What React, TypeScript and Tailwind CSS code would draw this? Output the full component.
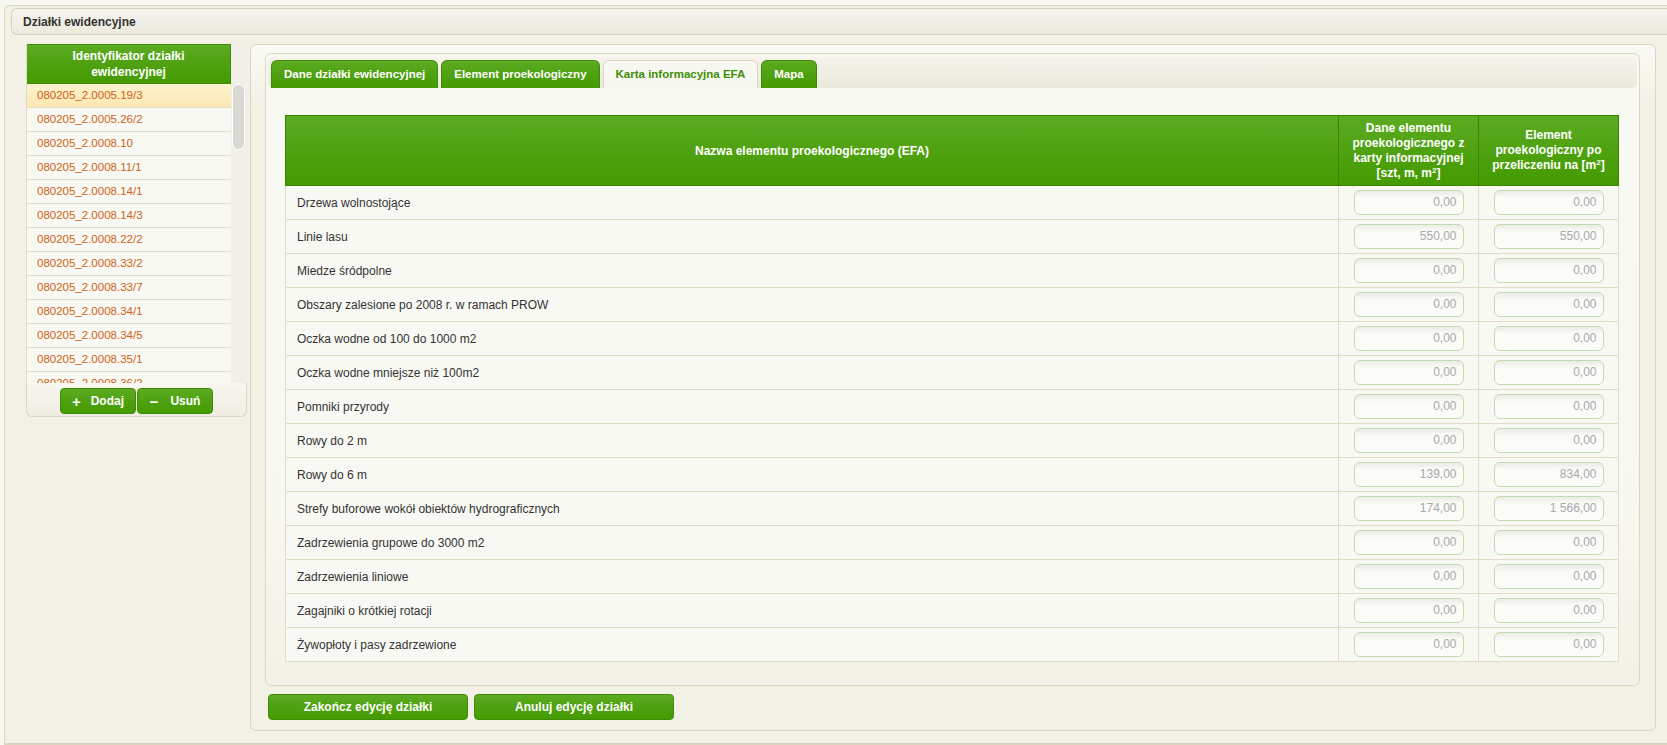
import * as React from "react";

const ids = [
  "080205_2.0005.19/3",
  "080205_2.0005.26/2",
  "080205_2.0008.10",
  "080205_2.0008.11/1",
  "080205_2.0008.14/1",
  "080205_2.0008.14/3",
  "080205_2.0008.22/2",
  "080205_2.0008.33/2",
  "080205_2.0008.33/7",
  "080205_2.0008.34/1",
  "080205_2.0008.34/5",
  "080205_2.0008.35/1",
  "080205_2.0008.36/2",
  "080205_2.0008.37/1",
];

const rows: [string, string, string][] = [
  ["Drzewa wolnostojące", "0,00", "0,00"],
  ["Linie lasu", "550,00", "550,00"],
  ["Miedze śródpolne", "0,00", "0,00"],
  ["Obszary zalesione po 2008 r. w ramach PROW", "0,00", "0,00"],
  ["Oczka wodne od 100 do 1000 m2", "0,00", "0,00"],
  ["Oczka wodne mniejsze niż 100m2", "0,00", "0,00"],
  ["Pomniki przyrody", "0,00", "0,00"],
  ["Rowy do 2 m", "0,00", "0,00"],
  ["Rowy do 6 m", "139,00", "834,00"],
  ["Strefy buforowe wokół obiektów hydrograficznych", "174,00", "1 566,00"],
  ["Zadrzewienia grupowe do 3000 m2", "0,00", "0,00"],
  ["Zadrzewienia liniowe", "0,00", "0,00"],
  ["Zagajniki o krótkiej rotacji", "0,00", "0,00"],
  ["Żywopłoty i pasy zadrzewione", "0,00", "0,00"],
];

const green = "bg-[linear-gradient(#5cab22,#50a212_45%,#449b00)]";

function ValueBox({ value }: { value: string }) {
  return (
    <div className="mx-auto w-[110px] h-[25px] rounded-[6px] border border-[#c3dbb0] bg-[linear-gradient(#ecece6,#fbfbf8_7px,#fcfcfa)] text-right pr-[6px] text-[12px] leading-[23px] text-[#a9a9a9]">
      {value}
    </div>
  );
}

function Tab({ label, active }: { label: string; active?: boolean }) {
  return active ? (
    <div className="h-[28px] px-[12px] rounded-t-[6px] border border-b-0 border-[#dcd6bf] bg-[#f8f8f3] text-[#3f8f06] text-[11.5px] font-bold flex items-center">
      {label}
    </div>
  ) : (
    <div className={`h-[28px] px-[12px] rounded-t-[6px] border border-b-0 border-[#3f8b08] ${green} text-white text-[11.5px] font-bold flex items-center`}>
      {label}
    </div>
  );
}

function Sq() {
  return <span className="relative -top-[4px] text-[8px] leading-none">2</span>;
}

export default function App() {
  return (
    <div className="h-[745px] w-full overflow-hidden bg-[#f8f8f3] pt-[5px] pl-[4px] font-['Liberation_Sans',Arial,sans-serif]">
      <div className="h-[738px] border border-r-0 border-b-0 border-[#dcd7c2] rounded-tl-[6px] bg-[#f3f1e6]">
        <div className="ml-[6px] mt-[2px] h-[27px] border border-r-0 border-[#d8d2bc] rounded-l-[6px] bg-[linear-gradient(#f6f4ee,#ede9de)] pl-[11px] flex items-center text-[12px] font-bold text-[#333]">
          Działki ewidencyjne
        </div>

        <div className="flex items-start mt-[9px] ml-[21px] gap-[3px]">
          {/* lista działek */}
          <div className="w-[221px] shrink-0">
            <div className="flex h-[339px]">
              <div className="w-[205px] overflow-hidden border-l border-[#e0dbc6]">
                <div className={`h-[40px] ${green} border border-l-0 border-[#3f8b08] text-white text-[12px] font-bold text-center leading-[16px] flex items-center justify-center px-[20px]`}>
                  Identyfikator działki ewidencyjnej
                </div>
                {ids.map((id, i) => (
                  <div
                    key={id}
                    className={`h-[24px] border-b border-[#e3dec9] pl-[10px] flex items-center text-[11.5px] text-[#cf5f14] ${
                      i === 0 ? "bg-[linear-gradient(#fdf2cf,#fbe8b2)]" : "bg-[#f9f9f4]"
                    }`}
                  >
                    {id}
                  </div>
                ))}
              </div>
              <div className="w-[16px] bg-[#f1efe7] pt-[40px] pl-[1px]">
                <div className="w-[13px] h-[66px] rounded-full bg-[#dad9d3] border border-white" />
              </div>
            </div>
            <div className="h-[34px] border border-t-0 border-[#dcd6c0] rounded-b-[6px] bg-[linear-gradient(#f7f6f0,#efece2)] flex justify-center gap-[1px] pt-[5px]">
              <button className={`w-[76px] h-[26px] rounded-[4px] border border-[#3f8b08] ${green} text-white text-[12px] font-bold flex items-center justify-center gap-[10px]`}>
                <span className="text-[15px] leading-none">+</span>
                <span>Dodaj</span>
              </button>
              <button className={`w-[76px] h-[26px] rounded-[4px] border border-[#3f8b08] ${green} text-white text-[12px] font-bold flex items-center justify-center gap-[12px]`}>
                <span className="text-[15px] leading-none">−</span>
                <span>Usuń</span>
              </button>
            </div>
          </div>

          {/* panel szczegółów */}
          <div className="w-[1406px] shrink-0 h-[687px] border border-[#dcd6c0] rounded-[6px] bg-[linear-gradient(#fafaf6,#f3f1e6_60px)] pt-[8px] pl-[14px] pr-[15px]">
            <div className="h-[633px] border border-[#ddd7c0] rounded-[6px] bg-[linear-gradient(#f9f9f4,#f8f8f2_70%,#f3f1e7)] pt-[3px] px-[2px]">
              <div className="h-[31px] rounded-[5px] bg-[linear-gradient(#f5f3ec,#ece8dc)] flex items-end gap-[3px] pl-[3px]">
                <Tab label="Dane działki ewidencyjnej" />
                <Tab label="Element proekologiczny" />
                <Tab label="Karta informacyjna EFA" active />
                <Tab label="Mapa" />
              </div>

              <table className="mt-[27px] ml-[17px] w-[1334px] table-fixed border-collapse text-[12px]">
                <colgroup>
                  <col />
                  <col className="w-[140px]" />
                  <col className="w-[140px]" />
                </colgroup>
                <thead>
                  <tr className={`${green} text-white font-bold h-[70px]`}>
                    <th className="border border-[#3b8502] px-[8px] font-bold">Nazwa elementu proekologicznego (EFA)</th>
                    <th className="border border-[#3b8502] px-[8px] font-bold leading-[15px]">
                      Dane elementu proekologicznego z karty informacyjnej [szt, m, m<Sq />]
                    </th>
                    <th className="border border-[#3b8502] px-[8px] font-bold leading-[15px]">
                      Element proekologiczny po przeliczeniu na [m<Sq />]
                    </th>
                  </tr>
                </thead>
                <tbody>
                  {rows.map(([name, a, b]) => (
                    <tr key={name} className="h-[34px] bg-[#f9f9f4]">
                      <td className="border border-[#e1dcc6] pl-[11px] text-[#333]">{name}</td>
                      <td className="border border-[#e1dcc6]">
                        <ValueBox value={a} />
                      </td>
                      <td className="border border-[#e1dcc6]">
                        <ValueBox value={b} />
                      </td>
                    </tr>
                  ))}
                </tbody>
              </table>
            </div>

            <div className="flex gap-[6px] mt-[8px] ml-[3px]">
              <button className={`w-[200px] h-[26px] rounded-[4px] border border-[#3f8b08] ${green} text-white text-[12px] font-bold`}>
                Zakończ edycję działki
              </button>
              <button className={`w-[200px] h-[26px] rounded-[4px] border border-[#3f8b08] ${green} text-white text-[12px] font-bold`}>
                Anuluj edycję działki
              </button>
            </div>
          </div>
        </div>
      </div>
      <div className="h-[2px] bg-[#dad4c0]" />
    </div>
  );
}
